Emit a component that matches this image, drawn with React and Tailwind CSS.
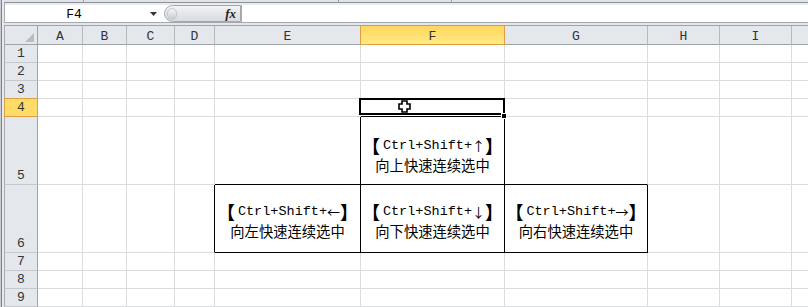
import React from "react";

const COLS = ["A", "B", "C", "D", "E", "F", "G", "H", "I", "J"];
const ROWS = [1, 2, 3, 4, 5, 6, 7, 8, 9];

const BLACK_R = new Set(["D6", "E5", "F5", "E6", "F6", "G6"]);
const BLACK_B = new Set(["E5", "F4", "F5", "G5", "E6", "F6", "G6"]);

const TEXTS = {
  F5: ["↑", "向上快速连续选中"],
  E6: ["←", "向左快速连续选中"],
  F6: ["↓", "向下快速连续选中"],
  G6: ["→", "向右快速连续选中"],
};

const CJK = { fontFamily: '"Noto Sans CJK SC", "Noto Sans", sans-serif' };
const MONO = { fontFamily: '"Liberation Mono", "DejaVu Sans Mono", monospace' };

function CellText({ arrow, label, low }) {
  return (
    <div
      className={
        "w-full h-full flex flex-col items-center justify-center text-black " +
        (low ? "pt-[9px]" : "pt-[5px]")
      }
    >
      <div className="flex items-center h-[19px] whitespace-nowrap">
        <span className="inline-flex w-[12px] justify-end text-[18px] leading-[19px] font-bold" style={CJK}>
          【
        </span>
        <span className="text-[13.5px] leading-[19px] pl-[3px]" style={MONO}>
          Ctrl+Shift+
        </span>
        <span className="text-[13px] leading-[19px]" style={CJK}>
          {arrow}
        </span>
        <span className="inline-flex w-[12px] justify-start text-[18px] leading-[19px] font-bold" style={CJK}>
          】
        </span>
      </div>
      <div className="text-[14.3px] leading-[19px] whitespace-nowrap" style={CJK}>
        {label}
      </div>
    </div>
  );
}

function RowHeader({ n }) {
  if (n === 4) {
    return (
      <div
        className="bg-[#ffdb68] border-l border-r border-b border-[#dca040] flex items-end justify-center pb-[2px] text-[13px] leading-none text-[#333]"
        style={MONO}
      >
        {n}
      </div>
    );
  }
  const bottom = n === 3 ? "border-b-[#dca040]" : "border-b-[#c5c9ce]";
  return (
    <div
      className={
        "bg-[#e4e7ec] border-l border-l-[#a9adb2] border-r border-r-[#9ea2a7] border-b flex items-end justify-center pb-[2px] text-[13px] leading-none text-[#333] " +
        bottom
      }
      style={MONO}
    >
      {n}
    </div>
  );
}

function ColHeader({ c }) {
  if (c === "F") {
    return (
      <div
        className="bg-gradient-to-b from-[#ffd65e] to-[#ffea82] border-r border-b border-[#dca040] flex items-center justify-center pt-[2px] text-[13px] leading-none text-[#333]"
        style={MONO}
      >
        {c}
      </div>
    );
  }
  const right = c === "E" ? "border-r-[#dca040]" : "border-r-[#b6babf]";
  return (
    <div
      className={
        "bg-[#e4e7ec] border-r border-b border-b-[#9ea2a7] flex items-center justify-center pt-[2px] text-[13px] leading-none text-[#333] " +
        right
      }
      style={MONO}
    >
      {c === "J" ? "" : c}
    </div>
  );
}

function Cell({ id }) {
  const r = BLACK_R.has(id) ? "border-r-black" : "border-r-[#dadcdd]";
  const b = BLACK_B.has(id) ? "border-b-black" : "border-b-[#dadcdd]";
  const t = TEXTS[id];
  return (
    <div className={"bg-white border-r border-b " + r + " " + b}>
      {t ? <CellText arrow={t[0]} label={t[1]} low={id === "F5"} /> : null}
    </div>
  );
}

export default function App() {
  return (
    <div className="w-[808px] h-[307px] overflow-hidden bg-white flex relative">
      {/* left window frame */}
      <div className="w-[4px] h-full flex shrink-0">
        <div className="w-[1px] bg-[#c9cdd2]" />
        <div className="w-[1px] bg-[#7f8388]" />
        <div className="w-[2px] bg-[#e6e9ed]" />
      </div>

      <div className="flex-1 flex flex-col min-w-0">
        {/* top strip */}
        <div className="h-[3px] bg-[#dfe3e8] border-b border-[#8e9297] flex">
          <div className="w-[80px] border-r border-[#9ea2a7]" />
          <div className="w-[255px] border-r border-[#9ea2a7]" />
          <div className="w-[113px] border-r border-[#9ea2a7]" />
        </div>
        <div className="h-[3px] bg-[#e9ecef] border-l border-[#a9adb2]" />

        {/* formula bar */}
        <div className="h-[20px] flex border-l border-b border-[#a9adb2] border-b-[#a5a9ae]">
          <div
            className="w-[138px] bg-white flex items-center justify-center text-[13px] leading-none text-black pt-[1px]"
            style={MONO}
          >
            F4
          </div>
          <div className="w-[21px] bg-white flex items-center justify-center">
            <svg width="7" height="4" viewBox="0 0 7 4">
              <polygon points="0,0 7,0 3.5,4" fill="#333" />
            </svg>
          </div>
          <div className="w-[77px] h-full rounded-l-[10px] border border-[#a5a9ae] bg-gradient-to-b from-[#f0f2f4] to-[#d9dce0] flex items-center pl-[2px]">
            <div className="w-[10px] h-[12px] rounded-full bg-gradient-to-b from-[#f4f5f7] to-[#c9ccd1] border border-[#c4c7cc]" />
            <div className="flex-1" />
            <span
              className="italic font-bold text-[13px] leading-none text-[#222] pr-[4px] pb-[1px]"
              style={{ fontFamily: '"Liberation Serif", serif' }}
            >
              fx
            </span>
          </div>
          <div className="flex-1 bg-white border-l border-[#a5a9ae]" />
        </div>
        <div className="h-[3px] bg-[#e4e7eb] border-b border-[#a0a4a8]" />

        {/* sheet grid */}
        <div className="relative grid grid-cols-[34px_45px_44px_48px_40px_146px_144px_143px_72px_72px_40px] grid-rows-[19px_18px_18px_18px_18px_68px_68px_18px_18px_18px]">
          {/* corner */}
          <div className="bg-[#e4e7ec] border-l border-l-[#a9adb2] border-r border-r-[#9ea2a7] border-b border-b-[#9ea2a7] flex items-end justify-end pr-[3px] pb-[2px]">
            <svg width="9" height="9" viewBox="0 0 9 9">
              <polygon points="9,0 9,9 0,9" fill="#b9bdc2" />
            </svg>
          </div>
          {COLS.map((c) => (
            <ColHeader key={c} c={c} />
          ))}
          {ROWS.map((n) => (
            <React.Fragment key={n}>
              <RowHeader n={n} />
              {COLS.map((c) => (
                <Cell key={c + n} id={c + n} />
              ))}
            </React.Fragment>
          ))}

          {/* selection box on F4 */}
          <div className="absolute left-[355px] top-[72px] w-[146px] h-[17px] border-2 border-black pointer-events-none" />
          {/* fill handle */}
          <div className="absolute left-[497px] top-[87px] w-[6px] h-[6px] bg-black border border-white pointer-events-none" />
          {/* cursor */}
          <svg
            className="absolute left-[394px] top-[74px] pointer-events-none"
            width="13"
            height="13"
            viewBox="0 0 13 13"
          >
            <polygon
              points="4,1 9,1 9,4 12,4 12,9 9,9 9,12 4,12 4,9 1,9 1,4 4,4"
              fill="white"
              stroke="black"
              strokeWidth="1.6"
            />
          </svg>
        </div>
      </div>
    </div>
  );
}
